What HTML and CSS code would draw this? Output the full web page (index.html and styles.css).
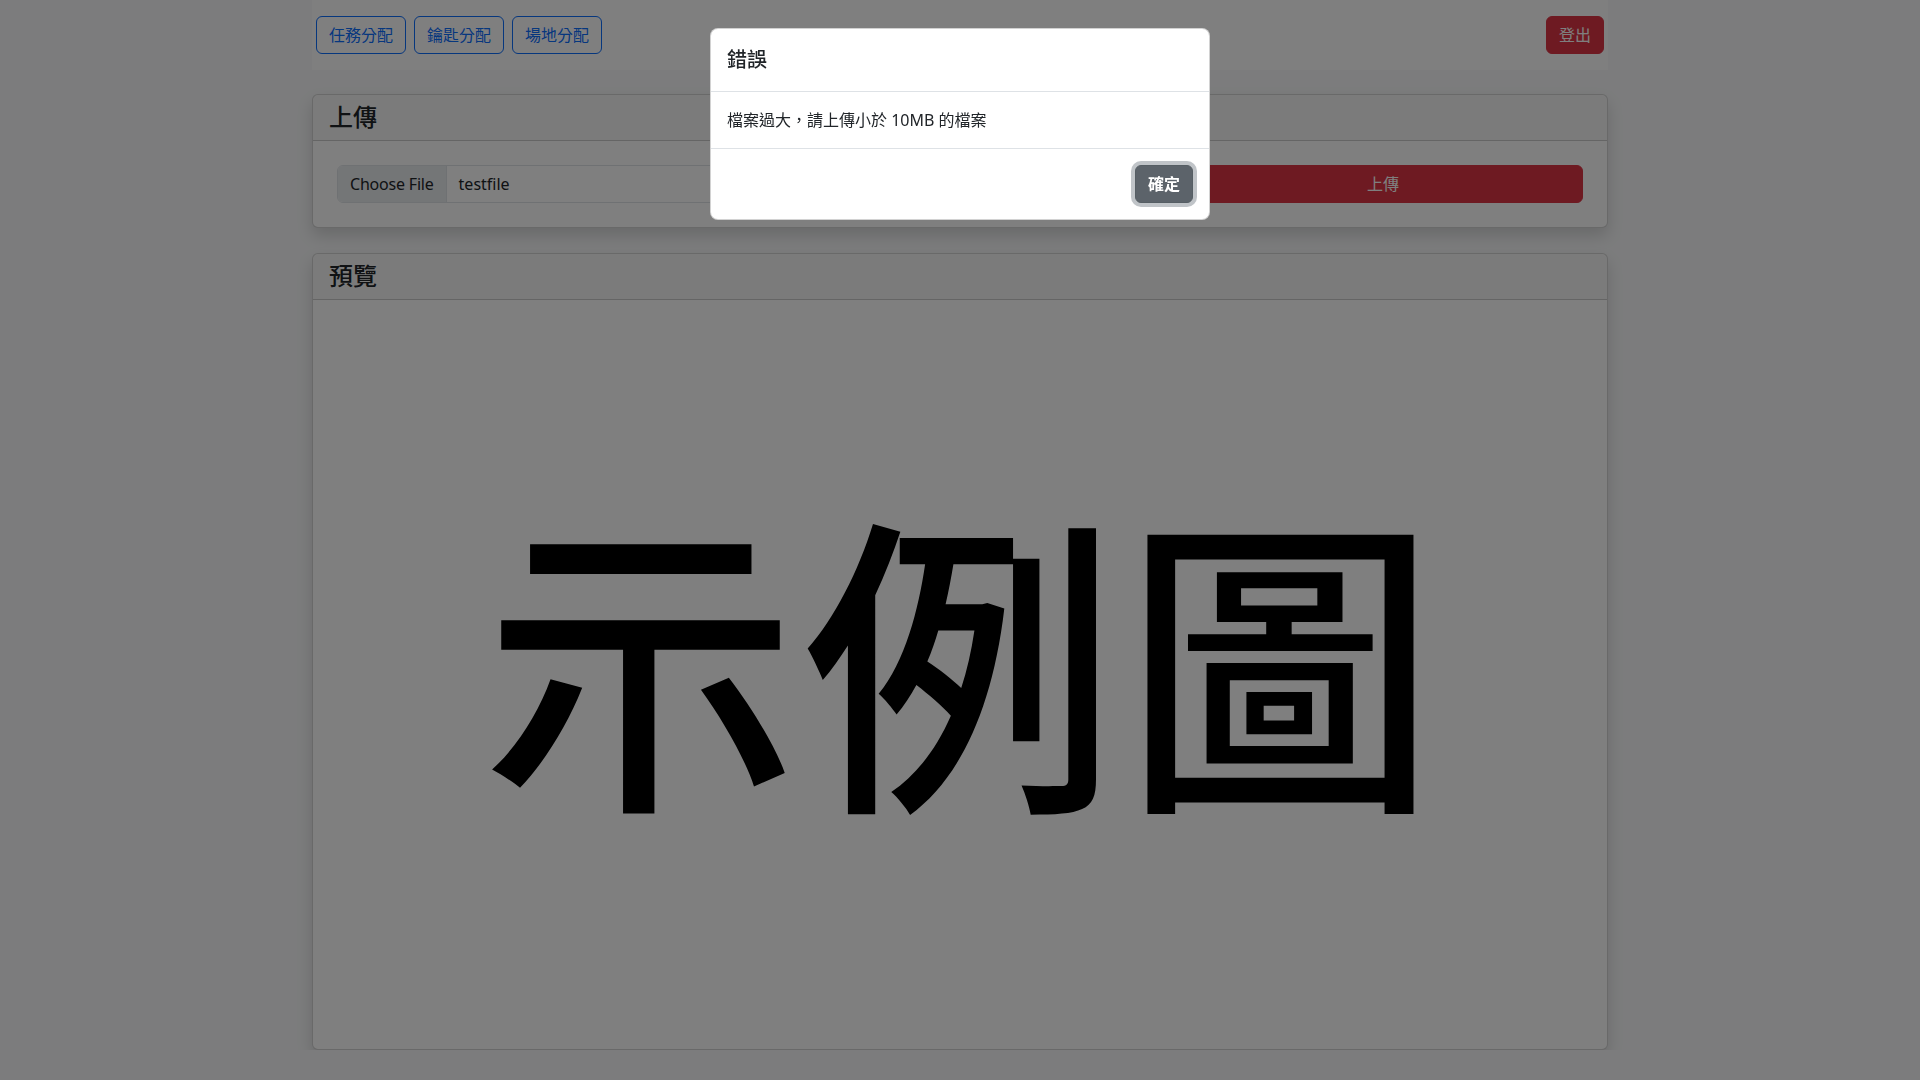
FILE: index.html
```html
<!DOCTYPE html>
<html lang="zh-Hant">
<head>
<meta charset="utf-8">
<title>上傳</title>
<link rel="stylesheet" href="styles.css">
</head>
<body>
<div class="container">
  <nav class="topbar">
    <div class="nav-group">
      <button class="btn btn-outline">任務分配</button>
      <button class="btn btn-outline">鑰匙分配</button>
      <button class="btn btn-outline">場地分配</button>
    </div>
    <button class="btn btn-danger">登出</button>
  </nav>

  <section class="card card-upload">
    <div class="card-header"><h4 class="card-title">上傳</h4></div>
    <div class="card-body">
      <div class="upload-row">
        <div class="file-control">
          <span class="file-btn">Choose File</span>
          <span class="file-name">testfile</span>
        </div>
        <button class="btn btn-danger btn-block">上傳</button>
      </div>
    </div>
  </section>

  <section class="card card-preview">
    <div class="card-header"><h4 class="card-title">預覽</h4></div>
    <div class="card-body">
      <div class="preview-image">示例圖</div>
    </div>
  </section>
</div>

<div class="backdrop"></div>
<div class="modal">
  <div class="modal-dialog">
    <div class="modal-header"><h5 class="modal-title">錯誤</h5></div>
    <div class="modal-body">檔案過大，請上傳小於 10MB 的檔案</div>
    <div class="modal-footer">
      <button class="btn btn-secondary btn-focus">確定</button>
    </div>
  </div>
</div>
</body>
</html>
```

FILE: styles.css
```css
* { box-sizing: border-box; }

html, body {
  margin: 0;
  padding: 0;
}

body {
  background: #f8f9fa;
  color: #212529;
  font-family: "Noto Sans", "Noto Sans CJK TC", sans-serif;
  font-size: 16px;
  line-height: 1.5;
}

.container {
  width: 1320px;
  margin: 0 auto;
  padding: 0 12px;
}

.topbar {
  background: #ffffff;
  display: flex;
  justify-content: space-between;
  align-items: center;
  padding: 16px 4px;
  height: 70px;
}

.nav-group {
  display: flex;
  gap: 8px;
}

.btn {
  font-family: "Noto Sans", "Noto Sans CJK TC", sans-serif;
  font-size: 16px;
  line-height: 24px;
  height: 38px;
  padding: 6px 12px;
  border-radius: 6px;
  border: 1px solid transparent;
  background: transparent;
  cursor: pointer;
}

.btn-outline {
  color: #0d6efd;
  border-color: #0d6efd;
}

.btn-danger {
  color: #ffffff;
  background: #dc3545;
  border-color: #dc3545;
}

.btn-secondary {
  color: #ffffff;
  background: #5c636a;
  border-color: #565e64;
}

.btn-focus {
  box-shadow: 0 0 0 4px rgba(130, 138, 145, 0.5);
  font-weight: 700;
}

.btn-block {
  width: 100%;
}

.card {
  background: #ffffff;
  border: 1px solid rgba(0, 0, 0, 0.175);
  border-radius: 6px;
  box-shadow: 0 8px 16px rgba(0, 0, 0, 0.15);
  overflow: hidden;
}

.card-upload {
  margin-top: 24px;
}

.card-preview {
  margin-top: 25px;
}

.card-header {
  background: rgba(0, 0, 0, 0.03);
  border-bottom: 1px solid rgba(0, 0, 0, 0.175);
  padding: 8px 16px;
}

.card-title {
  margin: 0;
  font-size: 24px;
  font-weight: 500;
  line-height: 28.8px;
}

.card-body {
  padding: 24px;
}

.upload-row {
  display: grid;
  grid-template-columns: 1fr 400px;
  gap: 23px;
}

.file-control {
  display: flex;
  height: 38px;
  border: 1px solid #dee2e6;
  border-radius: 6px;
  overflow: hidden;
  background: #ffffff;
}

.file-btn {
  background: #e9ecef;
  padding: 6px 12px;
  border-right: 1px solid #dee2e6;
  line-height: 24px;
  letter-spacing: -0.2px;
}

.file-name {
  padding: 6px 12px;
  line-height: 24px;
}

.card-preview .card-body {
  height: 749px;
  display: flex;
  align-items: center;
  justify-content: center;
}

.preview-image {
  font-family: "Noto Sans CJK TC", sans-serif;
  font-size: 314px;
  font-weight: 500;
  line-height: 1;
  color: #000000;
  letter-spacing: 6px;
  margin-top: -46px;
  margin-left: 6px;
}

.backdrop {
  position: fixed;
  inset: 0;
  background: rgba(0, 0, 0, 0.5);
}

.modal {
  position: fixed;
  inset: 0;
}

.modal-dialog {
  width: 500px;
  margin: 28px auto 0;
  background: #ffffff;
  border: 1px solid rgba(0, 0, 0, 0.175);
  border-radius: 8px;
}

.modal-header {
  padding: 16px;
  border-bottom: 1px solid #dee2e6;
}

.modal-title {
  margin: 0;
  font-size: 20px;
  font-weight: 500;
  line-height: 30px;
}

.modal-body {
  padding: 16px;
}

.modal-footer {
  display: flex;
  justify-content: flex-end;
  padding: 12px;
  border-top: 1px solid #dee2e6;
}

.modal-footer .btn {
  margin: 4px;
}
```
